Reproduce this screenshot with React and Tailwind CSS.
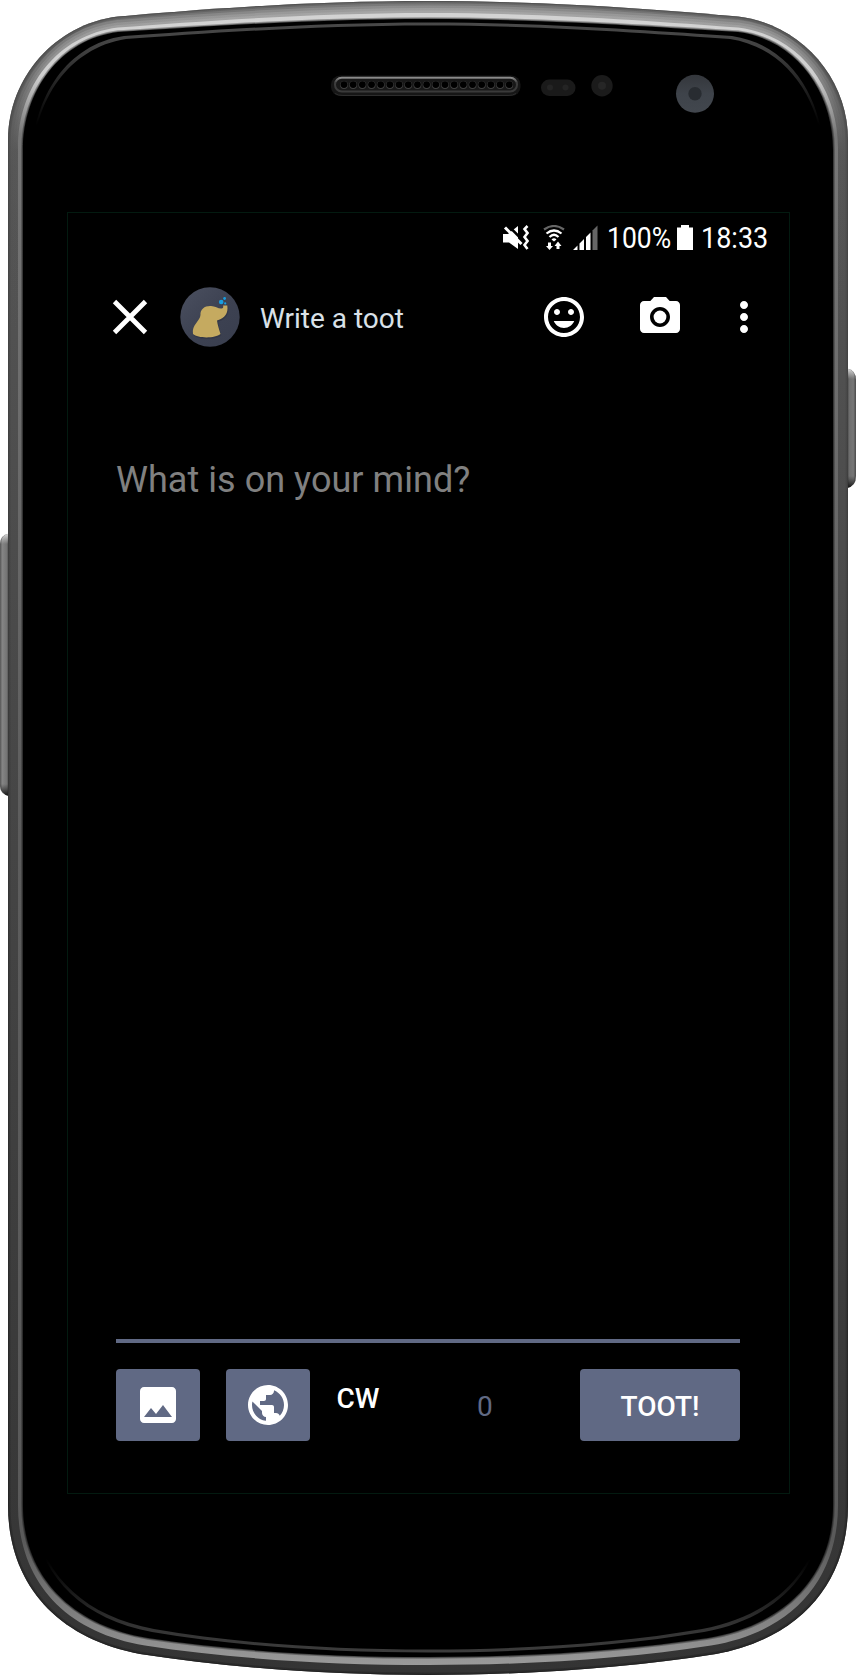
import React from "react";
import { MdTagFaces, MdCameraAlt, MdMoreVert, MdImage, MdPublic } from "react-icons/md";

const CENTER = 428;

// Builds an outline symmetric about the phone's vertical axis.
// Points describe the left half, from the left side to the top or bottom centre.
function outline(top, bottom) {
  const m = (x) => 2 * CENTER - x;
  const [t0, t1, t2, t3, t4, t5, t6] = top;
  const [b0, b1, b2, b3, b4, b5, b6] = bottom;
  const p = (a) => `${a[0]} ${a[1]}`;
  const q = (a) => `${m(a[0])} ${a[1]}`;
  return [
    `M${p(t0)}C${p(t1)} ${p(t2)} ${p(t3)}C${p(t4)} ${p(t5)} ${p(t6)}`,
    `C${q(t5)} ${q(t4)} ${q(t3)}C${q(t2)} ${q(t1)} ${q(t0)}`,
    `L${q(b0)}C${q(b1)} ${q(b2)} ${q(b3)}C${q(b4)} ${q(b5)} ${q(b6)}`,
    `C${p(b5)} ${p(b4)} ${p(b3)}C${p(b2)} ${p(b1)} ${p(b0)}Z`,
  ].join("");
}

const OUTER = outline(
  [[8, 140], [8, 78], [55, 24], [118, 16.5], [200, 9], [310, 1], [428, 1]],
  [[8, 1505], [8, 1582], [55, 1638], [140, 1654], [230, 1668], [330, 1675], [428, 1675]]
);
const MID = outline(
  [[18, 148], [18, 87], [57, 35], [118, 27.5], [200, 21.5], [310, 13], [428, 13]],
  [[18, 1505], [18, 1579], [63, 1632], [145, 1645.5], [232, 1659], [330, 1665], [428, 1665]]
);
const INNER = outline(
  [[23, 150], [23, 91], [60, 39.5], [118, 32], [200, 27], [310, 19], [428, 19]],
  [[23, 1505], [23, 1575], [70, 1625], [148, 1638], [235, 1651], [330, 1657], [428, 1657]]
);
const RIDGE = outline(
  [[32, 155], [34, 98], [66, 44.5], [124, 36], [200, 31], [310, 22.5], [428, 22.5]],
  [[33, 1505], [34, 1569], [76, 1618], [152, 1632], [235, 1646], [330, 1652.5], [428, 1652.5]]
);
const GLASS = outline(
  [[32.5, 158], [35, 101], [68, 48], [126, 39], [200, 34], [310, 25.5], [428, 25.5]],
  [[33.5, 1503], [35, 1567], [78, 1615], [154, 1629], [235, 1643], [330, 1649.5], [428, 1649.5]]
);

function PhoneShell() {
  return (
    <svg className="absolute inset-0" width="856" height="1676" viewBox="0 0 856 1676" aria-hidden="true">
      <defs>
        <linearGradient id="rim" x1="0" y1="0" x2="0" y2="1676" gradientUnits="userSpaceOnUse">
          <stop offset="0" stopColor="#7d7d7d" />
          <stop offset="0.02" stopColor="#666" />
          <stop offset="0.1" stopColor="#555" />
          <stop offset="0.45" stopColor="#474747" />
          <stop offset="1" stopColor="#343434" />
        </linearGradient>
        <linearGradient id="bevel" x1="0" y1="0" x2="0" y2="1676" gradientUnits="userSpaceOnUse">
          <stop offset="0" stopColor="#d4d4d4" />
          <stop offset="0.045" stopColor="#cfcfcf" />
          <stop offset="0.08" stopColor="#777" />
          <stop offset="0.5" stopColor="#5d5d5d" />
          <stop offset="0.92" stopColor="#5a5a5a" />
          <stop offset="0.97" stopColor="#858585" />
          <stop offset="1" stopColor="#a0a0a0" />
        </linearGradient>
        <linearGradient id="edge" x1="0" y1="0" x2="0" y2="1676" gradientUnits="userSpaceOnUse">
          <stop offset="0" stopColor="#4a4a4a" />
          <stop offset="1" stopColor="#1c1c1c" />
        </linearGradient>
        <linearGradient id="sheen" x1="0" y1="0" x2="0" y2="1676" gradientUnits="userSpaceOnUse">
          <stop offset="0" stopColor="#b4b4b4" />
          <stop offset="0.04" stopColor="#949494" />
          <stop offset="0.09" stopColor="#595959" stopOpacity="0.6" />
          <stop offset="0.2" stopColor="#555" stopOpacity="0" />
        </linearGradient>
        <linearGradient id="ridge" x1="0" y1="0" x2="0" y2="1676" gradientUnits="userSpaceOnUse">
          <stop offset="0" stopColor="#505050" />
          <stop offset="0.03" stopColor="#404040" />
          <stop offset="0.075" stopColor="#000" />
          <stop offset="0.93" stopColor="#000" />
          <stop offset="0.97" stopColor="#333" />
          <stop offset="1" stopColor="#444" />
        </linearGradient>
        <linearGradient id="key" x1="0" y1="0" x2="1" y2="0">
          <stop offset="0" stopColor="#555" />
          <stop offset="0.25" stopColor="#858585" />
          <stop offset="0.75" stopColor="#747474" />
          <stop offset="1" stopColor="#444" />
        </linearGradient>
        <linearGradient id="keyRight" x1="1" y1="0" x2="0" y2="0">
          <stop offset="0" stopColor="#4a4a4a" />
          <stop offset="0.3" stopColor="#777" />
          <stop offset="0.75" stopColor="#6d6d6d" />
          <stop offset="1" stopColor="#3c3c3c" />
        </linearGradient>
        <linearGradient id="keyCap" x1="0" y1="0" x2="0" y2="1">
          <stop offset="0" stopColor="#ddd" />
          <stop offset="1" stopColor="#ccc" stopOpacity="0" />
        </linearGradient>
        <linearGradient id="keyFoot" x1="0" y1="0" x2="0" y2="1">
          <stop offset="0" stopColor="#222" stopOpacity="0" />
          <stop offset="1" stopColor="#111" />
        </linearGradient>
        <linearGradient id="slot" x1="0" y1="0" x2="0" y2="1">
          <stop offset="0" stopColor="#8a8a8a" />
          <stop offset="0.35" stopColor="#3c3c3c" />
          <stop offset="1" stopColor="#3a3a3a" />
        </linearGradient>
        <linearGradient id="lens" x1="0" y1="0" x2="0" y2="1">
          <stop offset="0" stopColor="#34373c" />
          <stop offset="0.5" stopColor="#3e434a" />
          <stop offset="1" stopColor="#42474e" />
        </linearGradient>
        <clipPath id="rimClip">
          <path d={OUTER} />
        </clipPath>
      </defs>

      {/* side keys */}
      <path d="M9 533.5Q0 535 0 544V786Q0 794 9 796Z" fill="url(#key)" />
      <path d="M9 533.5Q1 535 1 544H9Z" fill="url(#keyCap)" />
      <path d="M0 784Q0 794 9 796V784Z" fill="url(#keyFoot)" />
      <path d="M847 368.500Q856 370 856 380V476Q856 486 847 488Z" fill="url(#keyRight)" />
      <path d="M847 368.500Q855 370 855 379H847Z" fill="url(#keyCap)" />
      <path d="M856 476Q856 486 847 488V476Z" fill="url(#keyFoot)" />

      {/* metal rim */}
      <path d={OUTER} fill="url(#rim)" />
      <path d={MID} fill="none" stroke="url(#sheen)" strokeOpacity="0.35" strokeWidth="15" clipPath="url(#rimClip)" />
      <path d={MID} fill="none" stroke="url(#sheen)" strokeOpacity="0.45" strokeWidth="10" />
      <path d={MID} fill="none" stroke="url(#sheen)" strokeOpacity="0.6" strokeWidth="5" />
      <path d={OUTER} fill="none" stroke="url(#edge)" strokeWidth="5" strokeOpacity="0.4" clipPath="url(#rimClip)" />
      <path d={OUTER} fill="none" stroke="url(#edge)" strokeWidth="2" strokeOpacity="0.7" clipPath="url(#rimClip)" />
      <path d={MID} fill="url(#bevel)" />
      <path d={INNER} fill="#000" stroke="#000" strokeOpacity="0.3" strokeWidth="3.500" />
      <path d={INNER} fill="none" stroke="#000" strokeOpacity="0.4" strokeWidth="1.500" />
      <path d={RIDGE} fill="url(#ridge)" />
      <path d={GLASS} fill="#000" />

      {/* earpiece */}
      <rect x="331" y="75.500" width="189.500" height="20.500" rx="9" fill="#161616" />
      <path d="M335 93.500Q338 95.500 343 95.500H508Q513 95.500 516 93.500" fill="none" stroke="#2d2d2d" strokeWidth="1" />
      <rect x="335" y="77.800" width="182" height="13.700" rx="6.800" fill="#181818" stroke="url(#slot)" strokeWidth="2" />
      {Array.from({ length: 19 }, (_, i) => (
        <g key={i}>
          <circle cx={344 + i * 9.18} cy="85" r="3.900" fill="#424242" />
          <circle cx={344 + i * 9.18} cy="84.600" r="3.400" fill="#000" />
        </g>
      ))}

      {/* sensors and camera */}
      <rect x="541" y="79.500" width="34.500" height="16.500" rx="8.200" fill="#1a1a1a" />
      <circle cx="550" cy="87.500" r="3" fill="#242424" />
      <circle cx="565.500" cy="87.500" r="3" fill="#242424" />
      <circle cx="602" cy="85.700" r="10.700" fill="#1b1b1b" />
      <circle cx="602" cy="85.700" r="4" fill="#262626" />
      <circle cx="695" cy="93.800" r="19" fill="url(#lens)" />
      <circle cx="695" cy="93.800" r="6.700" fill="#282c31" />
    </svg>
  );
}

function MutedIcon() {
  return (
    <svg className="shrink-0" width="26" height="26" viewBox="0 0 26 26" aria-hidden="true">
      <path d="M0 9H5L15 1V24L6 17.500H0Z" fill="#fff" />
      <path d="M5 0.500L19 14.500" stroke="#000" strokeWidth="2.600" />
      <path d="M2 2.500L18.500 19" stroke="#fff" strokeWidth="3" />
      <path d="M24.500 1L21.500 4L24.500 8L21.500 12L24.500 16L21.500 20L24.500 24" fill="none" stroke="#fff" strokeWidth="2.600" />
    </svg>
  );
}

function WifiIcon() {
  return (
    <svg width="22" height="26" viewBox="0 0 22 26" aria-hidden="true">
      <g fill="none" strokeWidth="2.200">
        <path d="M1 4.500Q11 -2.500 21 4.500" stroke="#666" />
        <path d="M3.500 8.500Q11 2.500 18.500 8.500" stroke="#fff" />
        <path d="M6.500 12Q11 7.500 15.500 12" stroke="#fff" />
      </g>
      <path d="M8.500 14.500Q11 12 13.500 14.500L11 16.500Z" fill="#fff" />
      <path d="M5 17.500H8V21H10L6.500 25L3 21H5ZM13.500 24V21H11.500L15 16.500L18.500 21H16.500V24Z" fill="#fff" />
    </svg>
  );
}

function SignalIcon() {
  return (
    <svg width="25" height="25" viewBox="0 0 25 25" aria-hidden="true">
      <path d="M0 25L4.500 20.500V25ZM6.500 25V18.500L11 14V25ZM13 25V12L17.500 7.500V25Z" fill="#fff" />
      <path d="M19.500 25V5.500L24.500 0.500V25Z" fill="#666" />
    </svg>
  );
}

function StatusBar() {
  return (
    <div className="flex h-[49px] items-center pl-[434.500px] text-[30px] leading-none text-white">
      <MutedIcon />
      <div className="ml-[14.500px] shrink-0"><WifiIcon /></div>
      <div className="ml-[8px] shrink-0"><SignalIcon /></div>
      <div className="ml-[8.500px] w-[70px] shrink-0 whitespace-nowrap">
        <span className="inline-block origin-left scale-x-[0.885]">100%</span>
      </div>
      <svg className="shrink-0" width="16" height="25" viewBox="0 0 16 25" aria-hidden="true">
        <path d="M0 25V2.500H4V0H12V2.500H16V25Z" fill="#fff" />
      </svg>
      <div className="ml-[8px] shrink-0 whitespace-nowrap">
        <span className="inline-block origin-left scale-x-[0.9]">18:33</span>
      </div>
    </div>
  );
}

function Avatar() {
  return (
    <svg width="60" height="60" viewBox="0 0 60 60" aria-hidden="true">
      <defs>
        <linearGradient id="avatarBg" x1="0" y1="0" x2="1" y2="1">
          <stop offset="0" stopColor="#4b5060" />
          <stop offset="0.5" stopColor="#3d4252" />
          <stop offset="1" stopColor="#393e4e" />
        </linearGradient>
      </defs>
      <circle cx="30" cy="30" r="29.700" fill="url(#avatarBg)" />
      <path
        d="M13 47.500C11.500 38 20 34 20.500 28C20 22 25 18.800 31 19C35 19.200 38 21.500 41 21.500C43.500 21.500 43.500 20 43 18.500L47.500 18.500C48.500 27 45 31.500 37.500 33.500C37.500 38 39 42 40.500 47.500C35 52 18 52 13 47.500Z"
        fill="#343847"
        transform="translate(0.800 1)"
      />
      <path
        d="M13 47C11.500 38 20 34 20.500 28C20 22 25 18.600 31 19C35 19.200 38 21.500 41 21.500C43.500 21.500 43.500 20 43 18.500L47.300 18.500C48.500 26 45 31.500 37 33.500C37.500 38 39 42 40.500 47C35 51.500 18 51.500 13 47Z"
        fill="#c5aa60"
      />
      <circle cx="41.200" cy="15" r="2.300" fill="#189ee0" />
      <circle cx="44.600" cy="11.500" r="1.400" fill="#189ee0" />
      <circle cx="45.200" cy="16.400" r="1.100" fill="#189ee0" />
    </svg>
  );
}

function Toolbar() {
  return (
    <header className="flex h-[109px] items-center pl-[43.500px] text-white">
      <button className="shrink-0" aria-label="Close">
        <svg width="36" height="36" viewBox="0 0 36 36">
          <path d="M2.500 2.500L33.500 33.500M33.500 2.500L2.500 33.500" stroke="#fff" strokeWidth="4.800" />
        </svg>
      </button>
      <div className="ml-[32px] shrink-0"><Avatar /></div>
      <h1 className="ml-[20.500px] mt-[5px] w-[280px] shrink-0 whitespace-nowrap text-[28px] leading-none text-[#d9e1e8]">Write a toot</h1>
      <button className="shrink-0" aria-label="Emoji"><MdTagFaces size={48} /></button>
      <button className="ml-[48px] shrink-0" aria-label="Camera"><MdCameraAlt size={48} /></button>
      <button className="ml-[36px] shrink-0" aria-label="More"><MdMoreVert size={48} /></button>
    </header>
  );
}

function ComposeBar() {
  return (
    <div className="mt-[26px] flex h-[72px] items-center">
      <button className="flex h-full w-[84px] items-center justify-center rounded-[4px] bg-[#606984] text-white" aria-label="Add image">
        <MdImage size={48} />
      </button>
      <button className="ml-[26px] flex h-full w-[84px] items-center justify-center rounded-[4px] bg-[#606984] text-white" aria-label="Visibility">
        <MdPublic size={48} />
      </button>
      <button className="mb-[12px] ml-[26.500px] w-[140.500px] text-left text-[28px] leading-none font-medium text-white">CW</button>
      <span className="mt-[4px] w-[103px] text-[28px] leading-none text-[#606984]">0</span>
      <button className="flex h-full w-[160px] items-center justify-center rounded-[4px] bg-[#606984] pt-[4px] text-[28px] leading-none font-medium text-white">
        TOOT!
      </button>
    </div>
  );
}

export default function App() {
  return (
    <div className="relative h-[1676px] w-[856px] overflow-hidden bg-white font-[Roboto,sans-serif]">
      <PhoneShell />
      <div className="relative px-[66px] pt-[212px] pl-[67px]">
        <main className="flex h-[1282px] w-[723px] flex-col border border-[#031a10]">
          <StatusBar />
          <Toolbar />
          <div className="mr-[49px] ml-[48px] flex flex-1 flex-col">
            <div className="flex-1 border-b-4 border-[#606984] pt-[91px] text-[36px] leading-none tracking-[0.04px] text-[#808080]">
              What is on your mind?
            </div>
            <ComposeBar />
            <div className="h-[52px]" />
          </div>
        </main>
      </div>
    </div>
  );
}
